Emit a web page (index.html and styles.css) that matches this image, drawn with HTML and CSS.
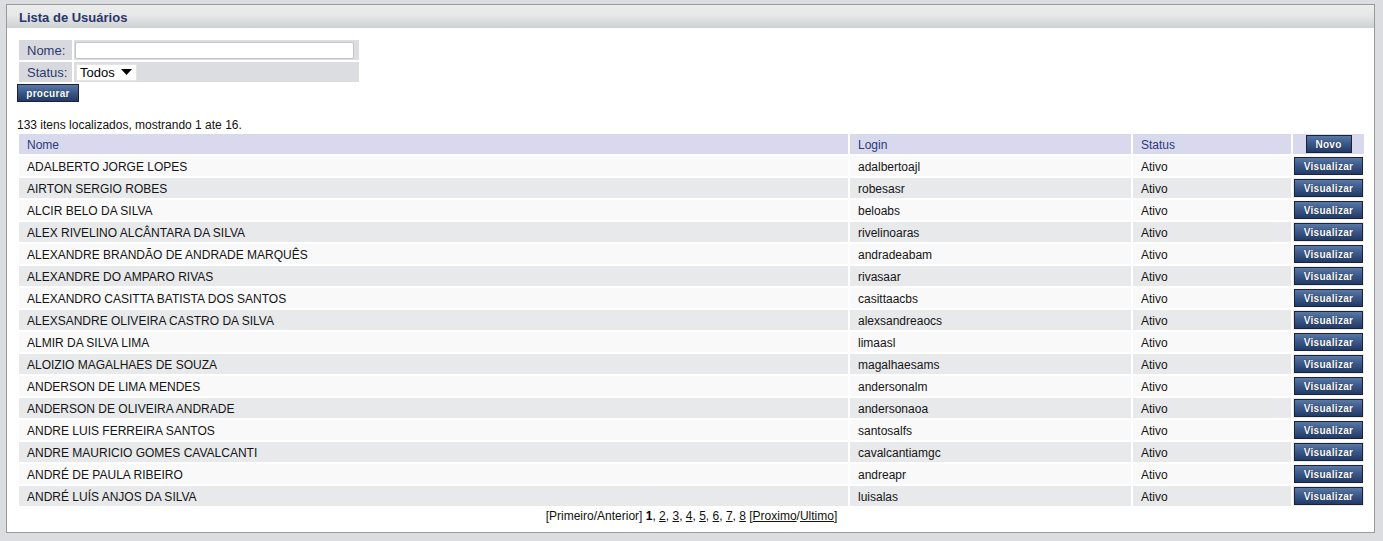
FILE: index.html
```html
<!DOCTYPE html>
<html lang="pt-BR">
<head>
<meta charset="utf-8">
<title>Lista de Usuários</title>
<link rel="stylesheet" href="styles.css">
</head>
<body>
<div class="panel">
  <div class="panel-head">Lista de Usuários</div>
  <div class="panel-body">
    <table class="filter">
      <tr>
        <td class="flabel">Nome:</td>
        <td class="fvalue"><input class="text-input" type="text"></td>
      </tr>
      <tr>
        <td class="flabel">Status:</td>
        <td class="fvalue">
          <div class="select"><span>Todos</span><svg width="11" height="6" viewBox="0 0 11 6"><path d="M0 0H11L5.5 6Z" fill="#000"/></svg></div>
        </td>
      </tr>
    </table>
    <button class="btn btn-search">procurar</button>
    <div class="summary">133 itens localizados, mostrando 1 ate 16.</div>
    <table class="grid">
      <colgroup><col><col class="c-login"><col class="c-status"><col class="c-btn"></colgroup>
      <thead>
        <tr><th>Nome</th><th>Login</th><th>Status</th><th class="cbtn"><button class="btn btn-new">Novo</button></th></tr>
      </thead>
      <tbody>
        <tr><td>ADALBERTO JORGE LOPES</td><td>adalbertoajl</td><td>Ativo</td><td class="cbtn"><button class="btn btn-view">Visualizar</button></td></tr>
        <tr><td>AIRTON SERGIO ROBES</td><td>robesasr</td><td>Ativo</td><td class="cbtn"><button class="btn btn-view">Visualizar</button></td></tr>
        <tr><td>ALCIR BELO DA SILVA</td><td>beloabs</td><td>Ativo</td><td class="cbtn"><button class="btn btn-view">Visualizar</button></td></tr>
        <tr><td>ALEX RIVELINO ALCÂNTARA DA SILVA</td><td>rivelinoaras</td><td>Ativo</td><td class="cbtn"><button class="btn btn-view">Visualizar</button></td></tr>
        <tr><td>ALEXANDRE BRANDÃO DE ANDRADE MARQUÊS</td><td>andradeabam</td><td>Ativo</td><td class="cbtn"><button class="btn btn-view">Visualizar</button></td></tr>
        <tr><td>ALEXANDRE DO AMPARO RIVAS</td><td>rivasaar</td><td>Ativo</td><td class="cbtn"><button class="btn btn-view">Visualizar</button></td></tr>
        <tr><td>ALEXANDRO CASITTA BATISTA DOS SANTOS</td><td>casittaacbs</td><td>Ativo</td><td class="cbtn"><button class="btn btn-view">Visualizar</button></td></tr>
        <tr><td>ALEXSANDRE OLIVEIRA CASTRO DA SILVA</td><td>alexsandreaocs</td><td>Ativo</td><td class="cbtn"><button class="btn btn-view">Visualizar</button></td></tr>
        <tr><td>ALMIR DA SILVA LIMA</td><td>limaasl</td><td>Ativo</td><td class="cbtn"><button class="btn btn-view">Visualizar</button></td></tr>
        <tr><td>ALOIZIO MAGALHAES DE SOUZA</td><td>magalhaesams</td><td>Ativo</td><td class="cbtn"><button class="btn btn-view">Visualizar</button></td></tr>
        <tr><td>ANDERSON DE LIMA MENDES</td><td>andersonalm</td><td>Ativo</td><td class="cbtn"><button class="btn btn-view">Visualizar</button></td></tr>
        <tr><td>ANDERSON DE OLIVEIRA ANDRADE</td><td>andersonaoa</td><td>Ativo</td><td class="cbtn"><button class="btn btn-view">Visualizar</button></td></tr>
        <tr><td>ANDRE LUIS FERREIRA SANTOS</td><td>santosalfs</td><td>Ativo</td><td class="cbtn"><button class="btn btn-view">Visualizar</button></td></tr>
        <tr><td>ANDRE MAURICIO GOMES CAVALCANTI</td><td>cavalcantiamgc</td><td>Ativo</td><td class="cbtn"><button class="btn btn-view">Visualizar</button></td></tr>
        <tr><td>ANDRÉ DE PAULA RIBEIRO</td><td>andreapr</td><td>Ativo</td><td class="cbtn"><button class="btn btn-view">Visualizar</button></td></tr>
        <tr><td>ANDRÉ LUÍS ANJOS DA SILVA</td><td>luisalas</td><td>Ativo</td><td class="cbtn"><button class="btn btn-view">Visualizar</button></td></tr>
      </tbody>
    </table>
    <div class="pager">[Primeiro/Anterior] <b>1</b>, <a href="#">2</a>, <a href="#">3</a>, <a href="#">4</a>, <a href="#">5</a>, <a href="#">6</a>, <a href="#">7</a>, <a href="#">8</a> [<a href="#">Proximo</a>/<a href="#">Ultimo</a>]</div>
  </div>
</div>
</body>
</html>
```
FILE: styles.css
```css
html, body {
  margin: 0;
  padding: 0;
}
body {
  background: #dcdde1;
  padding: 4px 8px 0 6px;
  font-family: "Liberation Sans", Arial, sans-serif;
  font-size: 12px;
  color: #111;
}
.panel {
  background: #fff;
  border: 1px solid #999a9c;
}
.panel-head {
  height: 21px;
  line-height: 21px;
  padding: 2px 0 0 12px;
  font-size: 13px;
  font-weight: bold;
  color: #2a356c;
  background: linear-gradient(to bottom, #ebedec 0%, #e6e8e7 45%, #cdd1d1 100%);
}
.panel-body {
  padding: 10px 8px 8px 10px;
}
.filter {
  border-spacing: 2px;
  border-collapse: separate;
}
.filter td {
  height: 20px;
  padding: 0;
}
.flabel {
  width: 45px;
  padding-left: 8px !important;
  background: #d8d9de;
  color: #2e3a6c;
  font-size: 13px;
}
.fvalue {
  width: 285px;
  background: #dcdde1;
}
.text-input {
  display: block;
  box-sizing: border-box;
  width: 279px;
  height: 17px;
  margin: 0 0 0 1px;
  border: 1px solid #c4c4c8;
  border-radius: 2px;
  background: #fff;
  padding: 0 3px;
  font: 13px "Liberation Sans", Arial, sans-serif;
}
.select {
  box-sizing: border-box;
  width: 61px;
  height: 17px;
  margin-left: 2px;
  display: flex;
  align-items: center;
  justify-content: space-between;
  padding: 0 4px 0 3px;
  background: #fff;
  border: 1px solid #e4e4e6;
  font-size: 13px;
  color: #000;
}
.btn {
  box-sizing: border-box;
  font-family: "Liberation Sans", Arial, sans-serif;
  font-weight: bold;
  font-size: 10px;
  letter-spacing: 0.3px;
  color: #fff;
  background: linear-gradient(to bottom, #5a78a6 0%, #3c5a8a 45%, #223b68 100%);
  border: 1px solid #1c2233;
  padding: 1px 0 0 0;
  height: 18px;
  line-height: 15px;
  text-shadow: 0 0 1px #0e1c38;
  cursor: pointer;
  display: inline-block;
}
.btn-search {
  width: 62px;
  display: block;
  margin-left: 0;
}
.btn-new {
  width: 46px;
}
.btn-view {
  width: 69px;
}
.summary {
  margin-top: 14px;
  padding-top: 2px;
  line-height: 14px;
  font-size: 12px;
  color: #111;
}
.grid {
  width: 100%;
  table-layout: fixed;
  border-collapse: separate;
  border-spacing: 2px;
}
.c-login { width: 281px; }
.c-status { width: 158px; }
.c-btn { width: 71px; }
.grid th, .grid td {
  height: 20px;
  box-sizing: border-box;
  padding: 1px 0 0 8px;
  text-align: left;
  font-size: 12px;
  white-space: nowrap;
  overflow: hidden;
}
.grid th {
  background: #d9d9ee;
  color: #2c3a78;
  font-weight: normal;
}
.grid td {
  color: #141414;
}
.grid tbody tr:nth-child(odd) td {
  background: #f9f9f9;
}
.grid tbody tr:nth-child(even) td {
  background: #e8e9eb;
}
.grid .cbtn {
  padding: 0;
  text-align: center;
  vertical-align: middle;
}
.grid .cbtn .btn {
  vertical-align: middle;
}
.pager {
  text-align: center;
  padding-top: 1px;
  line-height: 15px;
  font-size: 12px;
  color: #111;
}
.pager a {
  color: #111;
  text-decoration: underline;
}
.pager b {
  color: #000;
}
```
